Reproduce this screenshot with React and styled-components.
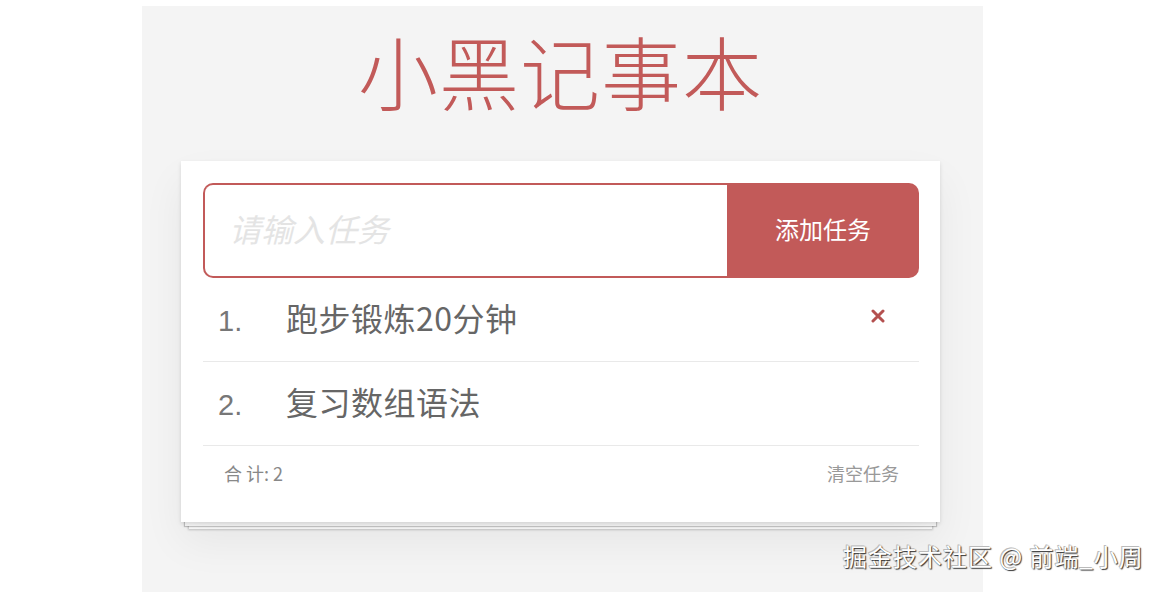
import styled, { createGlobalStyle } from 'styled-components';

const GlobalStyle = createGlobalStyle`
	html, body {
		margin: 0;
		padding: 0;
		background: #fff;
	}
	body {
		font-family: "Liberation Sans", "Noto Sans CJK SC", sans-serif;
		overflow: hidden;
	}
`;

const red = '#c25a59';

// Page
const Page = styled.div`
	position: relative;
	width: 1161px;
	height: 592px;
`;

const Panel = styled.section`
	box-sizing: border-box;
	margin: 6px 0 0 142px;
	width: 841px;
	height: 586px;
	padding-left: 39px;
	background: #f4f4f4;
`;

const Column = styled.div`
	width: 759px;
`;

const Title = styled.h1`
	box-sizing: border-box;
	margin: 0;
	height: 155px;
	padding-bottom: 30px;
	display: flex;
	align-items: center;
	justify-content: center;
	font-family: "Noto Sans CJK SC", sans-serif;
	font-weight: 200;
	font-size: 80px;
	line-height: 1;
	color: ${red};
	letter-spacing: 1px;
`;

// Card
const Card = styled.div`
	box-sizing: border-box;
	height: 361px;
	padding: 22px 21px 0 22px;
	background: #fff;
	box-shadow:
		0 2px 4px rgba(0, 0, 0, 0.12),
		0 20px 40px rgba(0, 0, 0, 0.06),
		0 8px 0 -4px #fcfcfc,
		0 8px 1px -3px rgba(0, 0, 0, 0.2),
		0 15px 0 -8px #fcfcfc,
		0 15px 2px -7px rgba(0, 0, 0, 0.2);
`;

const InputRow = styled.div`
	display: flex;
	height: 95px;
`;

const TaskInput = styled.input`
	flex: 1;
	min-width: 0;
	box-sizing: border-box;
	height: 100%;
	padding: 0 0 6px 24px;
	border: 2px solid ${red};
	border-right: none;
	border-radius: 10px 0 0 10px;
	outline: none;
	font-family: "Noto Sans CJK SC", sans-serif;
	font-size: 32px;
	font-style: italic;
	color: #555;

	&::placeholder {
		color: #e4e4e4;
	}
`;

const AddButton = styled.button`
	width: 192px;
	height: 100%;
	border: none;
	border-radius: 0 10px 10px 0;
	background: ${red};
	color: #fff;
	font-family: "Noto Sans CJK SC", sans-serif;
	font-size: 24px;
	padding: 0 0 4px;
	cursor: pointer;
`;

// List
const List = styled.ul`
	list-style: none;
	margin: 0;
	padding: 0;
`;

const Item = styled.li`
	box-sizing: border-box;
	display: flex;
	align-items: baseline;
	height: 84px;
	padding-top: 16px;
	border-bottom: 1px solid #e9e9e9;
	color: #666;
`;

const Index = styled.span`
	width: 83px;
	padding-left: 15px;
	box-sizing: border-box;
	font-family: "Liberation Sans", sans-serif;
	font-size: 29px;
	color: #777;
`;

const Label = styled.span`
	flex: 1;
	font-family: "Noto Sans CJK SC", sans-serif;
	font-size: 32px;
	letter-spacing: 0.5px;
	color: #666;
`;

const Remove = styled.button`
	align-self: flex-start;
	width: 40px;
	height: 40px;
	border: none;
	background: none;
	display: flex;
	align-items: center;
	justify-content: center;
	padding: 0;
	margin: 2px 21px 0 0;
	cursor: pointer;
`;

// Footer
const Footer = styled.footer`
	box-sizing: border-box;
	display: flex;
	align-items: flex-start;
	justify-content: space-between;
	height: 76px;
	padding: 14px 20px 0 21px;
	font-family: "Noto Sans CJK SC", sans-serif;
	font-size: 18px;
	color: #888;
`;

const Clear = styled.button`
	border: none;
	background: none;
	padding: 0;
	font-family: "Noto Sans CJK SC", sans-serif;
	font-size: 18px;
	color: #999;
	cursor: pointer;
`;

const Watermark = styled.div`
	position: absolute;
	left: 843px;
	top: 532px;
	font-family: "Noto Sans CJK SC", sans-serif;
	font-size: 24px;
	letter-spacing: 1px;
	color: #fff;
	text-shadow: 1px 1px 1px #333, -1px -1px 0 #bbb, 0 0 1px #555;
	white-space: nowrap;
`;

function CloseIcon() {
	return (
		<svg width="14" height="14" viewBox="0 0 14 14">
			<path d="M2 2 L12 12 M12 2 L2 12" stroke="#b4504f" strokeWidth="3" strokeLinecap="round" />
		</svg>
	);
}

const tasks = ['跑步锻炼20分钟', '复习数组语法'];

export default function App() {
	return (
		<>
			<GlobalStyle />
			<Page>
				<Panel>
					<Column>
						<Title>小黑记事本</Title>
						<Card>
							<InputRow>
								<TaskInput placeholder='请输入任务' />
								<AddButton>添加任务</AddButton>
							</InputRow>
							<List>
								{tasks.map((task, i) => (
									<Item key={task}>
										<Index>{i + 1}.</Index>
										<Label>{task}</Label>
										{i === 0 && (
											<Remove aria-label='删除'>
												<CloseIcon />
											</Remove>
										)}
									</Item>
								))}
							</List>
							<Footer>
								<span>合 计: {tasks.length}</span>
								<Clear>清空任务</Clear>
							</Footer>
						</Card>
					</Column>
				</Panel>
				<Watermark>掘金技术社区 @ 前端_小周</Watermark>
			</Page>
		</>
	);
}
